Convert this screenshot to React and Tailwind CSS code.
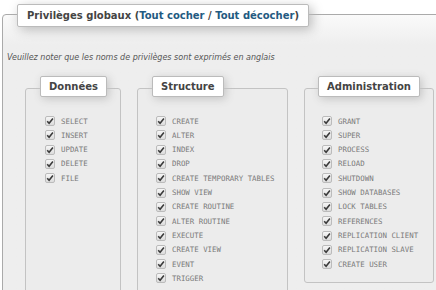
import React from 'react';

const groups = [
  {
    title: 'Données',
    width: 'w-[96px]',
    height: 'h-[222px]',
    legendMl: 'ml-[15px]',
    boxPl: 'pl-[19px]',
    items: ['SELECT', 'INSERT', 'UPDATE', 'DELETE', 'FILE'],
  },
  {
    title: 'Structure',
    width: 'w-[151px]',
    height: 'h-[222px]',
    legendMl: 'ml-[15px]',
    boxPl: 'pl-[18px]',
    items: [
      'CREATE', 'ALTER', 'INDEX', 'DROP', 'CREATE TEMPORARY TABLES', 'SHOW VIEW',
      'CREATE ROUTINE', 'ALTER ROUTINE', 'EXECUTE', 'CREATE VIEW', 'EVENT', 'TRIGGER',
    ],
  },
  {
    title: 'Administration',
    width: 'w-[130px]',
    height: 'h-[195px]',
    legendMl: 'ml-[14px]',
    boxPl: 'pl-[17px]',
    items: [
      'GRANT', 'SUPER', 'PROCESS', 'RELOAD', 'SHUTDOWN', 'SHOW DATABASES', 'LOCK TABLES',
      'REFERENCES', 'REPLICATION CLIENT', 'REPLICATION SLAVE', 'CREATE USER',
    ],
  },
];

function Check() {
  return (
    <span className="flex h-[10px] w-[10px] shrink-0 items-center justify-center rounded-[2px] border border-[#bbb] bg-gradient-to-b from-[#f6f6f6] to-[#dcdcdc]">
      <svg width="8" height="8" viewBox="0 0 8 8">
        <path d="M1.2 4.2 L3.1 6.2 L6.9 1.4" fill="none" stroke="#3a3a3a" strokeWidth="1.6" />
      </svg>
    </span>
  );
}

function Group({ g }) {
  return (
    <div className={`${g.width} shrink-0`}>
      <div className={`relative z-10 ${g.legendMl} flex h-[21px] w-fit items-center rounded-[2px] border border-[#bbb] bg-white px-[8px] text-[10px] font-bold text-[#444] shadow-[2px_2px_8px_#c4c4c4]`}>
        {g.title}
      </div>
      <div className={`-mt-[9px] ${g.height} rounded-[3px] border border-[#c3c3c3] bg-[#ececec] ${g.boxPl} pt-[25px]`}>
        {g.items.map(it => (
          <div key={it} className="flex h-[14.3px] items-center gap-[6px]">
            <Check />
            <span className="whitespace-pre font-['DejaVu_Sans_Mono',monospace] text-[7.4px] text-[#7a7a7a]">{it}</span>
          </div>
        ))}
      </div>
    </div>
  );
}

export default function App() {
  return (
    <div className="h-[290px] w-[436px] overflow-hidden bg-white pt-[4px] font-['DejaVu_Sans',sans-serif]">
      <div className="relative z-10 ml-[17px] flex h-[23px] w-fit items-center rounded-[2px] border border-[#bbb] bg-white px-[9px] text-[10px] font-bold text-[#444] shadow-[3px_3px_12px_#bbb]">
        Privilèges globaux (<span className="text-[#235a81]">Tout cocher</span>&nbsp;/&nbsp;<span className="text-[#235a81]">Tout décocher</span>)
      </div>
      <div className="-mt-[13px] ml-[2px] h-[300px] w-[450px] rounded-[4px] border border-[#aaa] bg-gradient-to-b from-[#fafafa] to-[#eee] to-[30px] pl-[22px] pt-[37px]">
        <p className="-ml-[18px] text-[8px] italic text-[#555]">Veuillez noter que les noms de privilèges sont exprimés en anglais</p>
        <div className="mt-[12px] flex gap-[16px]">
          {groups.map(g => <Group key={g.title} g={g} />)}
        </div>
      </div>
    </div>
  );
}
